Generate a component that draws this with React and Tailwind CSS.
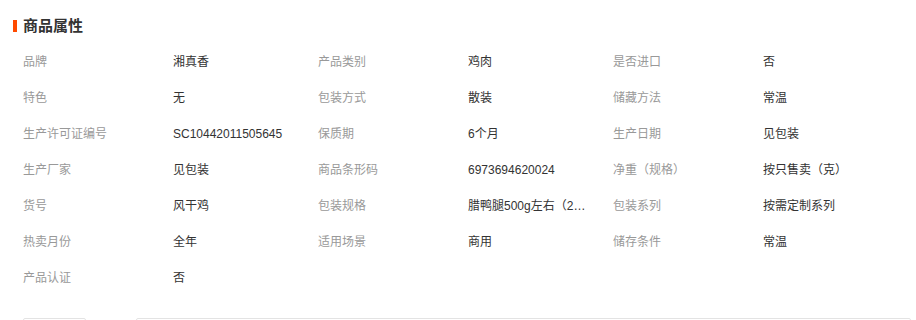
import React from "react";

const rows = [
  ["品牌", "湘真香", "产品类别", "鸡肉", "是否进口", "否"],
  ["特色", "无", "包装方式", "散装", "储藏方法", "常温"],
  ["生产许可证编号", "SC10442011505645", "保质期", "6个月", "生产日期", "见包装"],
  ["生产厂家", "见包装", "商品条形码", "6973694620024", "净重（规格）", "按只售卖（克）"],
  ["货号", "风干鸡", "包装规格", "腊鸭腿500g左右（2只装）", "包装系列", "按需定制系列"],
  ["热卖月份", "全年", "适用场景", "商用", "储存条件", "常温"],
  ["产品认证", "否"],
];

export default function App() {
  return (
    <div
      className="w-[916px] h-[320px] bg-white overflow-hidden"
      style={{ fontFamily: '"Liberation Sans", "Noto Sans CJK SC", sans-serif' }}
    >
      <div className="h-[44px] flex items-center pl-[13px] pt-[8px]">
        <div className="w-[4px] h-[12px] bg-[#ff4a00] mr-[6px]" />
        <div className="text-[15px] font-bold text-[#333] leading-[16px]">商品属性</div>
      </div>
      <div className="pl-[23px]">
        {rows.map((r, i) => (
          <div key={i} className="flex h-[36px] items-center text-[12px] leading-[14px]">
            {[0, 2, 4].map((j) =>
              r[j] ? (
                <React.Fragment key={j}>
                  <div className="w-[150px] text-[#999] whitespace-nowrap">{r[j]}</div>
                  <div className="w-[145px] text-[#333]">
                    <div className="max-w-[118px] truncate" title={r[j + 1]}>{r[j + 1]}</div>
                  </div>
                </React.Fragment>
              ) : null
            )}
          </div>
        ))}
      </div>
      <div className="flex pl-[23px] pr-[5px] mt-[22px]">
        <div className="w-[63px] h-[20px] border border-[#e3e3e3] rounded-t-[2px]" />
        <div className="flex-1 ml-[50px] h-[20px] border border-[#e3e3e3] rounded-t-[2px]" />
      </div>
    </div>
  );
}
